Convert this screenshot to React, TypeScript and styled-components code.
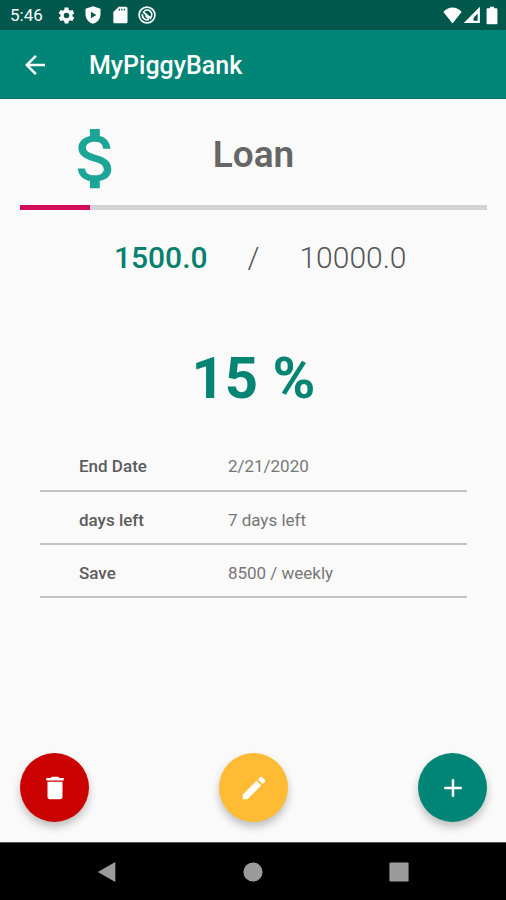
import React from "react";
import styled, { createGlobalStyle } from "styled-components";

const GlobalStyle = createGlobalStyle`
  *, *::before, *::after { box-sizing: border-box; }
  body { margin: 0; background: #fafafa; font-family: Roboto, "Liberation Sans", sans-serif; }
  button { font: inherit; border: 0; padding: 0; background: none; cursor: pointer; }
`;

const Screen = styled.div`
  display: flex;
  flex-direction: column;
  min-height: 100vh;
  background: #fafafa;
  color: #666;
`;

const StatusBar = styled.div`
  display: flex;
  align-items: center;
  justify-content: space-between;
  height: 30px;
  padding: 0 4px 0 10px;
  background: #00574b;
  color: #fff;
`;

const StatusGroup = styled.div<{ $gap: number }>`
  display: flex;
  align-items: center;
  gap: ${(p) => p.$gap}px;
`;

const Clock = styled.time`
  width: 40px;
  font-size: 17px;
  line-height: 20px;
`;

const Icon = styled.svg<{ $size: number }>`
  display: block;
  flex: none;
  width: ${(p) => p.$size}px;
  height: ${(p) => p.$size}px;
  fill: currentColor;
`;

const AppBar = styled.header`
  display: flex;
  align-items: center;
  gap: 39px;
  height: 69px;
  padding: 2px 20px 0;
  background: #018577;
  border-bottom: 1px solid #017367;
  color: #fff;
`;

const BackButton = styled.button`
  display: flex;
  color: inherit;
`;

const AppTitle = styled.h1`
  margin: 0;
  padding-top: 2px;
  font-size: 25px;
  line-height: 32px;
  font-weight: 500;
`;

const Content = styled.main`
  flex: 1;
  display: flex;
  flex-direction: column;
  padding: 20px 19px 20px 20px;
`;

const GoalHeader = styled.div`
  display: grid;
  grid-template-columns: 1fr auto 1fr;
`;

const GoalIcon = styled.div`
  padding-left: 37px;
  color: #1aa596;
`;

const GoalName = styled.h2`
  margin: 0;
  padding-top: 14px;
  font-size: 37px;
  line-height: 44px;
  font-weight: 600;
`;

const GoalProgress = styled.progress`
  appearance: none;
  display: block;
  width: 100%;
  height: 5px;
  margin-top: 7px;
  border: 0;
  background: #d3d3d3;
  &::-webkit-progress-bar { background: #d3d3d3; }
  &::-webkit-progress-value { background: #d30d59; }
  &::-moz-progress-bar { background: #d30d59; }
`;

const Amounts = styled.div`
  display: grid;
  grid-template-columns: 1fr auto 1fr;
  gap: 40px;
  margin-top: 30px;
  font-size: 30px;
  line-height: 36px;
  font-weight: 300;
  color: #555;
`;

const Saved = styled.strong`
  text-align: right;
  font-weight: 500;
  color: #07806f;
`;

const Percent = styled.p`
  margin: 66px 0 24px;
  text-align: center;
  font-size: 58px;
  line-height: 72px;
  font-weight: 700;
  color: #048472;
`;

const Details = styled.table`
  margin: 0 20px;
  border-collapse: collapse;
  font-size: 17px;
  line-height: 20px;
  text-align: left;
`;

const DetailRow = styled.tr`
  height: 53px;
  border-bottom: 2px solid #c2c2c2;
`;

const DetailLabel = styled.th`
  width: 44%;
  padding: 4px 0 0 39px;
  font-weight: 500;
  color: #5c5c5c;
`;

const DetailValue = styled.td`
  padding: 4px 0 0;
  color: #777;
`;

const Actions = styled.div`
  display: flex;
  justify-content: space-between;
  margin-top: auto;
`;

const Fab = styled.button<{ $color: string }>`
  display: flex;
  align-items: center;
  justify-content: center;
  width: 69px;
  height: 69px;
  border-radius: 50%;
  background: ${(p) => p.$color};
  color: #fff;
  box-shadow: 0 5px 8px rgba(0, 0, 0, 0.24);
`;

const NavBar = styled.nav`
  display: flex;
  align-items: center;
  justify-content: center;
  gap: 126px;
  height: 58px;
  background: #000;
  border-top: 1px solid #555;
`;

const NavButton = styled.button`
  display: flex;
  color: #9b9b9b;
`;

const details = [
  { label: "End Date", value: "2/21/2020" },
  { label: "days left", value: "7 days left" },
  { label: "Save", value: "8500 / weekly" },
];

function Glyph({ size, d }: { size: number; d: string }) {
  return (
    <Icon $size={size} viewBox="0 0 24 24" aria-hidden="true">
      <path fillRule="evenodd" d={d} />
    </Icon>
  );
}

const paths = {
  gear: "M19.43 12.98c.04-.32.07-.64.07-.98s-.03-.66-.07-.98l2.11-1.65c.19-.15.24-.42.12-.64l-2-3.46c-.12-.22-.39-.3-.61-.22l-2.49 1c-.52-.4-1.08-.73-1.69-.98l-.38-2.65C14.46 2.18 14.25 2 14 2h-4c-.25 0-.46.18-.49.42l-.38 2.65c-.61.25-1.17.59-1.69.98l-2.49-1c-.23-.09-.49 0-.61.22l-2 3.46c-.13.22-.07.49.12.64l2.11 1.65c-.04.32-.07.65-.07.98s.03.66.07.98l-2.11 1.65c-.19.15-.24.42-.12.64l2 3.46c.12.22.39.3.61.22l2.49-1c.52.4 1.08.73 1.69.98l.38 2.65c.03.24.24.42.49.42h4c.25 0 .46-.18.49-.42l.38-2.65c.61-.25 1.17-.59 1.69-.98l2.49 1c.23.09.49 0 .61-.22l2-3.46c.12-.22.07-.49-.12-.64l-2.11-1.65zM12 15.5a3.5 3.5 0 1 1 0-7 3.5 3.5 0 0 1 0 7z",
  shield: "M12 1.500L3 4.500v6.500c0 5.250 3.840 10.240 9 11.500 5.160-1.260 9-6.250 9-11.500V4.500zM9.500 8L16 12l-6.500 4z",
  sdCard: "M19 2h-8.500L4 8.500V20c0 1.100.9 2 2 2h13c1.100 0 2-.9 2-2V4c0-1.100-.9-2-2-2zM10.500 4.500H12v2h-1.500zM13.500 4.500H15v2h-1.500zM16.500 4.500H18v2h-1.500z",
  back: "M20 11H7.830l5.590-5.590L12 4l-8 8 8 8 1.410-1.410L7.830 13H20v-2z",
  dollar: "M11.8 10.9c-2.27-.59-3-1.2-3-2.15 0-1.09 1.01-1.85 2.7-1.85 1.78 0 2.440.85 2.5 2.1h2.210c-.07-1.72-1.12-3.3-3.21-3.81V3h-3v2.16c-1.940.42-3.500 1.68-3.500 3.610 0 2.310 1.910 3.460 4.700 4.130 2.500.6 3 1.480 3 2.410 0 .69-.49 1.790-2.700 1.790-2.060 0-2.870-.92-2.980-2.100h-2.200c.12 2.190 1.760 3.420 3.680 3.830V21h3v-2.150c1.950-.37 3.500-1.500 3.500-3.550 0-2.840-2.430-3.810-4.700-4.400z",
  trash: "M6 19c0 1.100.9 2 2 2h8c1.100 0 2-.9 2-2V7H6v12zM19 4h-3.500l-1-1h-5l-1 1H5v2h14V4z",
  pencil: "M3 17.250V21h3.750L17.810 9.940l-3.750-3.750L3 17.250zM20.710 7.040c.39-.39.39-1.020 0-1.410l-2.340-2.340c-.39-.39-1.020-.39-1.410 0l-1.830 1.830 3.750 3.750 1.830-1.830z",
  plus: "M19 13h-6v6h-2v-6H5v-2h6V5h2v6h6v2z",
  wifi: "M12 22L.5 7.500C3.500 4 7.500 2 12 2s8.500 2 11.500 5.500L12 22z",
  signal: "M1 22.500L22.500 1v21.500zM14 19.500h5.500V10L14 16z",
  battery: "M9.500 2h5v2h2.500c1 0 1.500.6 1.500 1.500v16c0 .9-.6 1.500-1.500 1.500H7c-.9 0-1.500-.6-1.500-1.500v-16C5.500 4.600 6 4 7 4h2.500z",
  triangle: "M1 12L22 0v24z",
  circle: "M12 .5a11.500 11.500 0 1 0 0 23 11.500 11.500 0 0 0 0-23z",
  square: "M2 .5h20q1.500 0 1.500 1.500v20q0 1.500-1.500 1.500H2Q.5 23.500.5 22V2Q.5.5 2 .5z",
};

export default function App() {
  return (
    <>
      <GlobalStyle />
      <Screen>
        <StatusBar>
          <StatusGroup $gap={7}>
            <Clock>5:46</Clock>
            <Glyph size={19} d={paths.gear} />
            <Glyph size={20} d={paths.shield} />
            <Glyph size={20} d={paths.sdCard} />
            <Icon $size={20} viewBox="0 0 24 24" aria-hidden="true">
              <circle cx="12" cy="12" r="9.500" fill="none" stroke="currentColor" strokeWidth="2" />
              <path
                d="M8.500 7.500a5.500 5.500 0 0 1 8 7.500M6.500 11a5.500 5.500 0 0 0 8 6M7 8l10 8.500M10 12.500l4 4"
                fill="none"
                stroke="currentColor"
                strokeWidth="2"
              />
            </Icon>
          </StatusGroup>
          <StatusGroup $gap={1}>
            <Glyph size={19} d={paths.wifi} />
            <Glyph size={18} d={paths.signal} />
            <Glyph size={20} d={paths.battery} />
          </StatusGroup>
        </StatusBar>
        <AppBar>
          <BackButton type="button" aria-label="Back">
            <Glyph size={30} d={paths.back} />
          </BackButton>
          <AppTitle>MyPiggyBank</AppTitle>
        </AppBar>
        <Content>
          <GoalHeader>
            <GoalIcon>
              <Glyph size={79} d={paths.dollar} />
            </GoalIcon>
            <GoalName>Loan</GoalName>
          </GoalHeader>
          <GoalProgress aria-label="Loan progress" value={15} max={100} />
          <Amounts>
            <Saved>1500.0</Saved>
            <span>/</span>
            <span>10000.0</span>
          </Amounts>
          <Percent>15 %</Percent>
          <Details>
            <tbody>
              {details.map((d) => (
                <DetailRow key={d.label}>
                  <DetailLabel scope="row">{d.label}</DetailLabel>
                  <DetailValue>{d.value}</DetailValue>
                </DetailRow>
              ))}
            </tbody>
          </Details>
          <Actions>
            <Fab type="button" $color="#cb0000" aria-label="Delete">
              <Glyph size={30} d={paths.trash} />
            </Fab>
            <Fab type="button" $color="#ffbb33" aria-label="Edit">
              <Glyph size={30} d={paths.pencil} />
            </Fab>
            <Fab type="button" $color="#018577" aria-label="Add">
              <Glyph size={30} d={paths.plus} />
            </Fab>
          </Actions>
        </Content>
        <NavBar>
          <NavButton type="button" aria-label="System back">
            <Glyph size={20} d={paths.triangle} />
          </NavButton>
          <NavButton type="button" aria-label="Home">
            <Glyph size={20} d={paths.circle} />
          </NavButton>
          <NavButton type="button" aria-label="Recent apps">
            <Glyph size={20} d={paths.square} />
          </NavButton>
        </NavBar>
      </Screen>
    </>
  );
}
